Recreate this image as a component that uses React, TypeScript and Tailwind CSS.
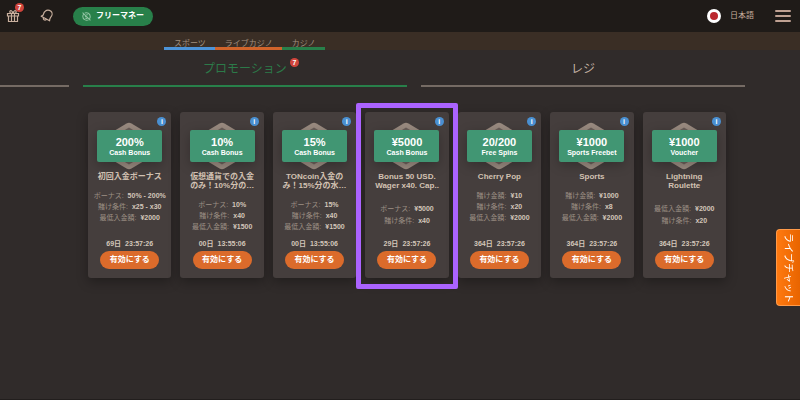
import React from 'react'

interface Detail {
  label: string;
  value: string;
}

interface Promo {
  amount: string;
  kind: string;
  title: Array<string>;
  details: Array<Detail>;
  days: string;
  time: string;
  highlighted?: boolean;
}

const promos: Array<Promo> = [
  {
    amount: '200%', kind: 'Cash Bonus', title: ['初回入金ボーナス'], days: '69日', time: '23:57:26',
    details: [{label: 'ボーナス:', value: '50% - 200%'}, {label: '賭け条件:', value: 'x25 - x30'}, {label: '最低入金額:', value: '¥2000'}]
  },
  {
    amount: '10%', kind: 'Cash Bonus', title: ['仮想通貨での入金', 'のみ！10%分の…'], days: '00日', time: '13:55:06',
    details: [{label: 'ボーナス:', value: '10%'}, {label: '賭け条件:', value: 'x40'}, {label: '最低入金額:', value: '¥1500'}]
  },
  {
    amount: '15%', kind: 'Cash Bonus', title: ['TONcoin入金の', 'み！15%分の水…'], days: '00日', time: '13:55:06',
    details: [{label: 'ボーナス:', value: '15%'}, {label: '賭け条件:', value: 'x40'}, {label: '最低入金額:', value: '¥1500'}]
  },
  {
    amount: '¥5000', kind: 'Cash Bonus', title: ['Bonus 50 USD.', 'Wager x40. Cap..'], days: '29日', time: '23:57:26', highlighted: true,
    details: [{label: 'ボーナス:', value: '¥5000'}, {label: '賭け条件:', value: 'x40'}]
  },
  {
    amount: '20/200', kind: 'Free Spins', title: ['Cherry Pop'], days: '364日', time: '23:57:26',
    details: [{label: '賭け金額:', value: '¥10'}, {label: '賭け条件:', value: 'x20'}, {label: '最低入金額:', value: '¥2000'}]
  },
  {
    amount: '¥1000', kind: 'Sports Freebet', title: ['Sports'], days: '364日', time: '23:57:26',
    details: [{label: '賭け金額:', value: '¥1000'}, {label: '賭け条件:', value: 'x8'}, {label: '最低入金額:', value: '¥2000'}]
  },
  {
    amount: '¥1000', kind: 'Voucher', title: ['Lightning', 'Roulette'], days: '364日', time: '23:57:26',
    details: [{label: '最低入金額:', value: '¥2000'}, {label: '賭け条件:', value: 'x20'}]
  },
]

const Header = () => (
  <header className='flex h-8 items-center bg-[#1f1b18] pl-1.5 pr-[9px] text-[8px] text-[#c9b09e]'>
    <button type='button' aria-label='Gifts' className='relative'>
      <svg className='h-3.5 w-3.5' viewBox='0 0 14 14' fill='none' stroke='currentColor' strokeWidth='1.2'>
        <path d='M1.5 4.5h11v2.5h-11zM2.5 7v5.5h9V7M5.5 4.5v8M8.5 4.5v8M7 4.5C5 4.5 3.500 3.800 3.800 2.500C4.200 1 6.500 1.500 7 4.500C7.500 1.500 9.800 1 10.200 2.500C10.500 3.800 9 4.500 7 4.500' />
      </svg>
      <span className='absolute -right-1 -top-1.5 flex h-[9px] w-[9px] items-center justify-center rounded-full bg-[#d0453c] text-[7px] font-bold leading-none text-white'>7</span>
    </button>
    <button type='button' aria-label='Notifications' className='ml-5'>
      <svg className='h-3.5 w-3.5' viewBox='0 0 14 14' fill='none' stroke='currentColor' strokeWidth='1.2' strokeLinejoin='round' strokeLinecap='round'>
        <path d='M5.200 2.200C7 0.800 9.500 1.200 11 2.300C12.600 3.800 12.300 6.500 10.800 8.200C9.900 9.300 9.500 10.300 9.600 11.800L1.200 7.200C3 6.800 3.400 5.900 3.600 4.800C3.800 3.700 4.300 2.800 5.200 2.200Z' />
        <path d='M3.400 8.800C3 10.500 4.500 11.900 6.500 10.600' />
      </svg>
    </button>
    <button type='button' className='ml-[19px] flex h-[19px] items-center gap-[5px] rounded-full bg-[#28804a] px-[9px] font-bold text-white'>
      <svg className='h-[9px] w-[9px] text-[#93c5a4]' viewBox='0 0 8 8' fill='none' stroke='currentColor' strokeWidth='0.9'>
        <path d='M0.500 0.500l7 7M2.500 0.900C4.500 0 7.300 1.200 7.300 4C7.300 4.800 7 5.600 6.700 6M5.800 7C3.500 8 0.700 6.500 0.700 4C0.700 3.200 1 2.500 1.400 2M3 3.300C2.500 4.200 4.800 4.200 4.800 5.200C4.500 5.900 3.500 5.800 3 5.300M3.800 2.400H5.100' />
      </svg>
      フリーマネー
    </button>
    <button type='button' className='ml-auto flex items-center gap-[9px]'>
      <span className='flex h-3.5 w-3.5 items-center justify-center rounded-full bg-white'>
        <span className='h-2 w-2 rounded-full bg-[#bb282f]' />
      </span>
      日本語
    </button>
    <button type='button' aria-label='Menu' className='ml-[21px] flex w-4 flex-col gap-[3px]'>
      <span className='h-0.5 rounded-full bg-[#bfa192]' />
      <span className='h-0.5 rounded-full bg-[#bfa192]' />
      <span className='h-0.5 rounded-full bg-[#bfa192]' />
    </button>
  </header>
)

const PromoCard: React.FC<Promo> = ({amount, kind, title, details, days, time, highlighted}: Promo) => {
  return (
    <article className='relative flex h-[166px] flex-col items-center rounded-[3px] bg-[#453e3d] pb-[9px] pt-[18px] shadow-[0_4px_12px_rgba(0,0,0,0.3)]'>
      {highlighted && <div className='pointer-events-none absolute -bottom-[11px] -left-[9px] -right-[9px] -top-[9px] z-10 rounded-[2px] border-[5px] border-[#ab63ff]' />}
      <button type='button' aria-label='Info'
              className='absolute right-[5px] top-[5px] flex h-[9px] w-[9px] items-center justify-center rounded-full bg-[#4a90d2] text-[7px] font-bold leading-none text-white'>i
      </button>
      <div className='relative flex h-8 w-[65px] flex-col items-center justify-center rounded-[2px] text-white'>
        <svg className='absolute -top-2 left-2 h-12 w-12' viewBox='0 0 48 48'>
          <path d='M21.500 1.500Q24 0 26.500 1.500L41.500 10.500Q44 12 44 15V33Q44 36 41.500 37.500L26.500 46.500Q24 48 21.500 46.500L6.500 37.500Q4 36 4 33V15Q4 12 6.500 10.500Z' fill='#9a8b80' />
          <path d='M24 5.500L40 15V33L24 42.500L8 33V15Z' fill='#6b605a' />
        </svg>
        <div className='absolute inset-0 rounded-[2px] bg-[#419673] shadow-[0_3px_12px_rgba(0,0,0,0.25)]' />
        <strong className='relative text-[11px] leading-[12px]'>{amount}</strong>
        <strong className='relative text-[7px] leading-[9px]'>{kind}</strong>
      </div>
      <h2 className='mt-[10px] whitespace-nowrap text-center text-[8px] font-bold leading-[9px] text-[#d3c2b3]'>
        {title.map(line => <span key={line} className='block'>{line}</span>)}
      </h2>
      <dl className={`text-[7px] ${details.length === 2 ? 'mt-[13px] leading-[12px]' : 'mt-[9px] leading-[11px]'}`}>
        {details.map(detail => (
          <div key={detail.label} className='flex justify-center gap-1 whitespace-nowrap'>
            <dt className='text-[#9c8f84]'>{detail.label}</dt>
            <dd className='font-bold text-[#d3c6ba]'>{detail.value}</dd>
          </div>
        ))}
      </dl>
      <p className='mt-auto flex gap-1 whitespace-nowrap text-[7px] font-bold leading-[12px] text-[#d3c6ba]'>
        <span>{days}</span>
        <span>{time}</span>
      </p>
      <button type='button' className='mt-px h-[18px] w-[59px] whitespace-nowrap rounded-full bg-[#db6b2b] text-[8px] font-bold leading-[18px] text-white'>有効にする</button>
    </article>
  )
}

export default function App() {
  return (
    <div className="relative min-h-screen border-b border-[#221e1d] bg-[#302b2a] font-['Liberation_Sans','Noto_Sans_CJK_JP',sans-serif]">
      <Header />
      <nav className='flex h-[18px] bg-[#3a2e25] pl-[164px] text-[8px] leading-[16px] text-[#a08e7f]'>
        <a href='#sports' className='border-b-[3px] border-[#4d94d8] pl-[10px] pr-[9px] pt-1'>スポーツ</a>
        <a href='#live' className='border-b-[3px] border-[#d0642b] pl-[10px] pr-[9px] pt-1'>ライブカジノ</a>
        <a href='#casino' className='border-b-[3px] border-[#28804a] pl-[10px] pr-[9px] pt-1'>カジノ</a>
      </nav>
      <nav className='flex h-[37px] gap-3.5 pr-[55px] text-[12px]'>
        <span className='w-[69px] shrink-0 border-b-2 border-[#756b64]' />
        <a href='#promotions' className='flex flex-1 items-center justify-center border-b-2 border-[#28804a] pt-0.5 text-[#2c7a49]'>
          <span className='relative'>
            プロモーション
            <span className='absolute -right-3 -top-0.5 flex h-[9px] w-[9px] items-center justify-center rounded-full bg-[#d0453c] text-[7px] font-bold leading-none text-white'>7</span>
          </span>
        </a>
        <a href='#cashier' className='flex flex-1 items-center justify-center border-b-2 border-[#756b64] pt-0.5 text-[#c5b3a5]'>レジ</a>
      </nav>
      <main className='grid grid-cols-7 gap-[9px] pl-[88px] pr-[74px] pt-[25px]'>
        {promos.map((promo, index) => <PromoCard key={index} {...promo} />)}
      </main>
      <button type='button'
              className='fixed right-0 top-[229px] flex h-[77px] w-6 items-center justify-center rounded-l-[4px] border border-r-0 border-[#ff9b4a] bg-linear-to-r from-[#ff7a10] to-[#e86400] text-[10px] text-white [writing-mode:vertical-rl] [text-orientation:sideways]'>ライブチャット
      </button>
    </div>
  )
}
